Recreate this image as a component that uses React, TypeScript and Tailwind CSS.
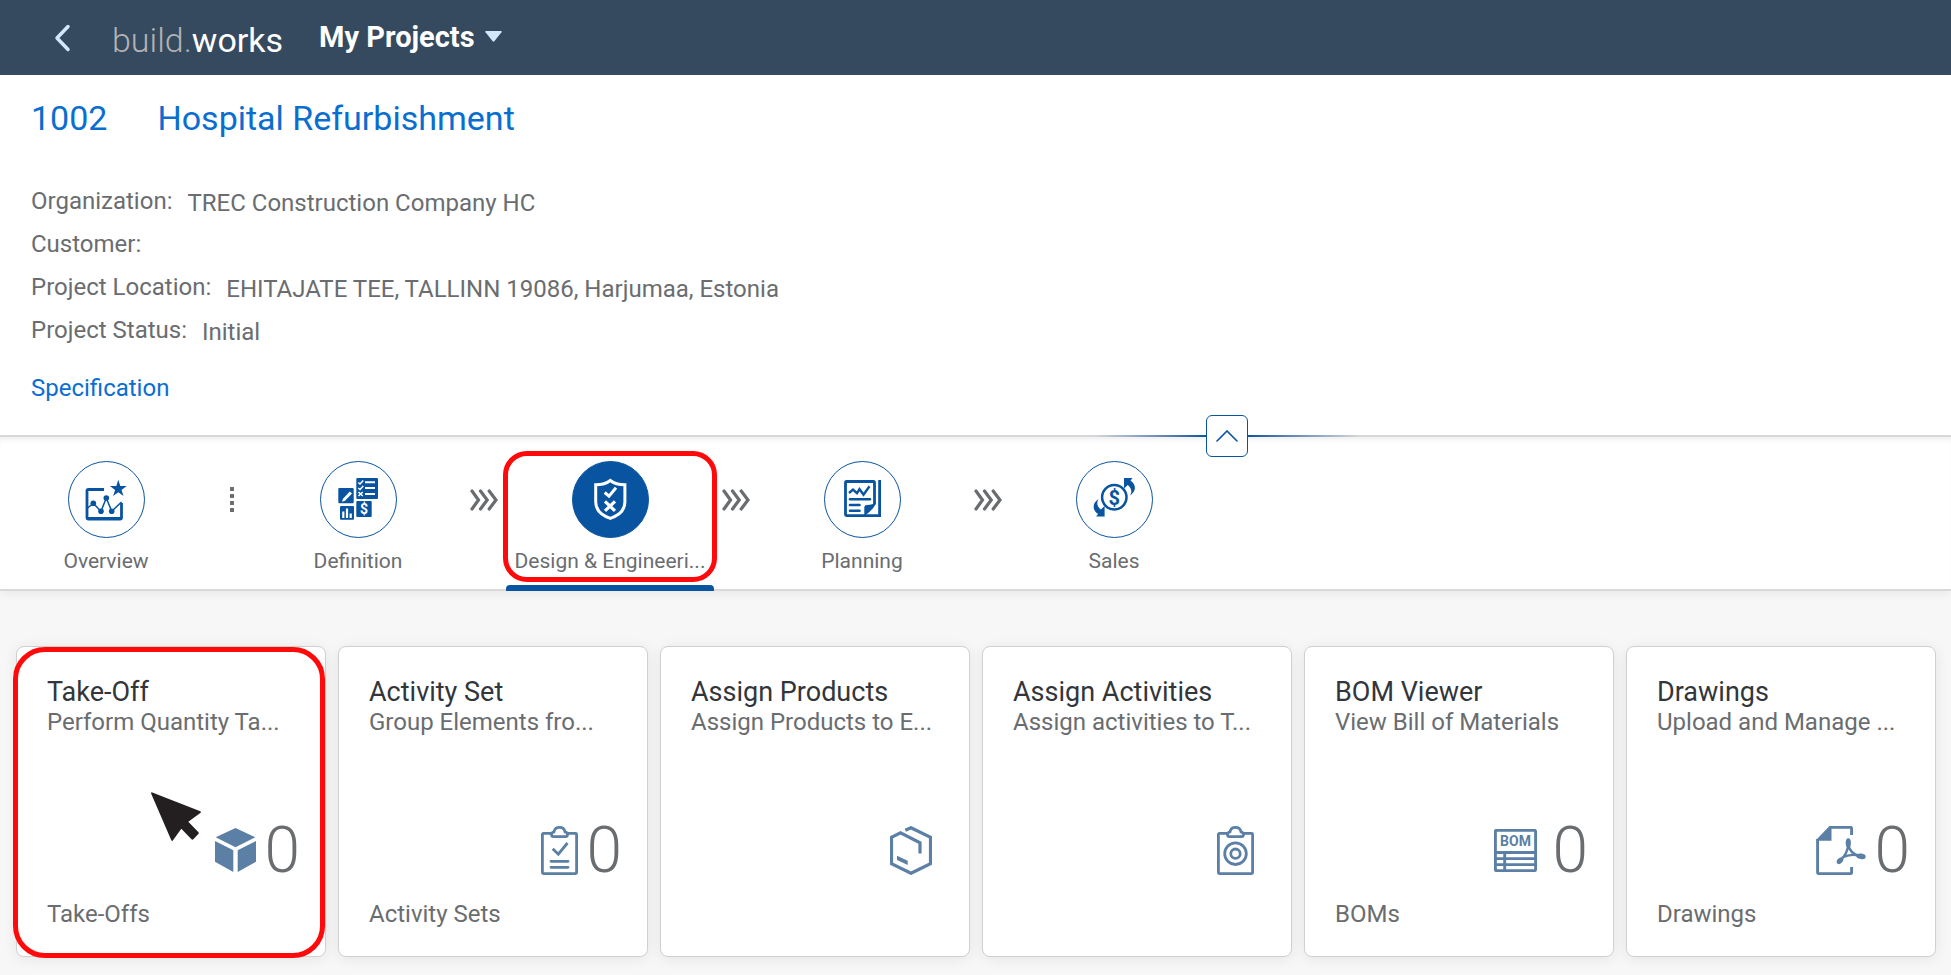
import type { ReactNode } from 'react';
import { clsx } from 'clsx';

interface Stage {
  id: string;
  label: string;
  icon: ReactNode;
  separator?: 'dots' | 'arrows';
}

interface Tile {
  title: string;
  subtitle: string;
  icon: ReactNode;
  value?: number;
  footer?: string;
}

/* Stage icons */

function OverviewIcon() {
  return (
    <svg viewBox="0 0 75 75" className="size-full" fill="none" stroke="currentColor">
      <path d="M35 27.5H19.5a1.5 1.5 0 0 0-1.5 1.5V55.5a1.5 1.5 0 0 0 1.5 1.5H51a1.5 1.5 0 0 0 1.5-1.5V41" strokeWidth="2.8" />
      <path d="M18 56.5H52.5" strokeWidth="3" />
      <path d="M17.5 47 24.3 41.3 32 49.3 37.3 36 42.7 49.3 52.5 40" strokeWidth="1.5" />
      <g fill="currentColor" stroke="none">
        <circle cx="24.3" cy="41.3" r="2.8" />
        <circle cx="32" cy="49.3" r="2.8" />
        <circle cx="37.3" cy="36" r="2.8" />
        <circle cx="42.7" cy="49.3" r="2.8" />
        <path d="M49.3 17.8l2 6.2h6.4l-5.2 3.9 2 6.2-5.2-3.9-5.2 3.9 2-6.2-5.2-3.9h6.4z" />
      </g>
    </svg>
  );
}

function DefinitionIcon() {
  return (
    <svg viewBox="0 0 75 75" className="size-full" fill="none" stroke="#fff">
      <g fill="currentColor" stroke="none">
        <rect x="35.3" y="16" width="21.7" height="21" rx="1" />
        <rect x="17.3" y="26" width="15.4" height="15.3" rx="1" />
        <rect x="35.3" y="39" width="15.4" height="16" rx="1" />
        <rect x="19" y="44" width="14" height="13.7" rx="1" />
      </g>
      <path d="M44 20.3h10M44 26h10M44 32h10" strokeWidth="2" />
      <path d="M37.3 20.5l1.7 1.5 3.3-3.5M37.3 26l1.7 1.5 3.3-3.5M37.5 30l4.3 4M41.8 30l-4.3 4" strokeWidth="1.5" />
      <path d="M22 36.8l6.8-7.3 2.2 2.1-6.9 7.1-3.2 1z" fill="#fff" stroke="none" />
      <path d="M22.3 56v-6.5M26 56v-9.5M29.7 56v-4.5" strokeWidth="2.2" />
      <text x="43" y="52" fontSize="14" fontWeight="700" textAnchor="middle" fill="#fff" stroke="none">$</text>
    </svg>
  );
}

function DesignIcon() {
  return (
    <svg viewBox="0 0 75 75" className="size-full" fill="none" stroke="currentColor">
      <path d="M37.3 18.5C33.5 21.5 28.5 22.8 22.7 22.8V40C22.7 48.5 29 53.5 37.3 56.3 45.6 53.5 51.9 48.5 51.9 40V22.8C46.1 22.8 41.1 21.5 37.3 18.5z" strokeWidth="3" />
      <path d="M31.7 30.5l4.3 3.7 7-8.5" strokeWidth="3" />
      <path d="M32 39.3l10 9.6M42 39.3l-10 9.6" strokeWidth="3.2" />
    </svg>
  );
}

function PlanningIcon() {
  return (
    <svg viewBox="0 0 75 75" className="size-full" fill="none" stroke="currentColor">
      <path d="M49.5 42.5V20.5a1 1 0 0 0-1-1H21.5a1 1 0 0 0-1 1V52.6a1 1 0 0 0 1 1H54.6V18" strokeWidth="2.8" />
      <path d="M24 31l4-3.5 4 3.7 2.5-4 4 5.5 6-8.5" strokeWidth="2.4" />
      <path d="M25 37.3h20M25 43h9.5M25 48.7h9.5" strokeWidth="2.6" strokeLinecap="round" />
      <path d="M39.3 54V45.5Q39.3 43 42 43 48 43 50.9 40 50.5 46 39.3 54z" fill="currentColor" stroke="none" />
    </svg>
  );
}

function SalesIcon() {
  return (
    <svg viewBox="0 0 75 75" className="size-full" fill="none" stroke="currentColor">
      <circle cx="37.3" cy="35.3" r="12.2" strokeWidth="2.5" />
      <text x="37.3" y="42.5" fontSize="20" fontWeight="700" textAnchor="middle" fill="currentColor" stroke="none">$</text>
      <g fill="currentColor" stroke="none">
        <path d="M47 16H55.5L53.5 18.5C59.5 22.5 59.5 29.5 53 33.5 55.5 29.5 54.5 26.5 50.8 23L47 26.5z" />
        <path d="M27.6 54.6H19.1L21.1 52.1C15.1 48.1 15.1 41.1 21.6 37.1 19.1 41.1 20.1 44.1 23.8 47.6L27.6 44.1z" />
      </g>
    </svg>
  );
}

/* Tile icons */

function CubeIcon() {
  return (
    <svg width="41" height="44" viewBox="0 0 41 44" fill="currentColor">
      <path d="M20.5 0 40.3 9.3 20.5 19.3.7 9.3z" />
      <path d="M0 13 18.3 22.3V44L0 33.7z" />
      <path d="M41 13 22.7 22.3V44L41 33.7z" />
    </svg>
  );
}

function Clipboard({ children }: { children: ReactNode }) {
  return (
    <svg width="37" height="49" viewBox="0 0 37 49" fill="none" stroke="currentColor" strokeWidth="2.8">
      <path d="M10 7.4H2.4a1 1 0 0 0-1 1V46.6a1 1 0 0 0 1 1H34.6a1 1 0 0 0 1-1V8.4a1 1 0 0 0-1-1H27" />
      <path d="M12.5 10.6Q10.5 10.6 10.5 8.5 10.5 6.3 13 5.8 14 1.4 18.5 1.4 23 1.4 24 5.8 26.5 6.3 26.5 8.5 26.5 10.6 24.5 10.6z" />
      {children}
    </svg>
  );
}

function ActivitySetIcon() {
  return (
    <Clipboard>
      <path d="M11.7 22.7l5.6 5.5 9.2-11.2" />
      <path d="M10 35.3h17M10 41.3h17" strokeLinecap="round" />
    </Clipboard>
  );
}

function ActivitiesIcon() {
  return (
    <Clipboard>
      <circle cx="18.5" cy="27.7" r="10.8" />
      <circle cx="18.5" cy="27.7" r="4.7" />
    </Clipboard>
  );
}

function ProductsIcon() {
  return (
    <svg width="42" height="49" viewBox="0 0 42 49" fill="none" stroke="currentColor" strokeWidth="3.2">
      <path d="M15.3 4.3 21 1.7 40.5 11.3V37.7L21 47.3 1.5 37.7V11.3L10.5 6.9 30 16.8V27.5" />
      <path d="M7 29.7 17.7 34.7V39L7 34z" fill="currentColor" stroke="none" />
    </svg>
  );
}

function BomIcon() {
  return (
    <svg width="50" height="43" viewBox="0 0 50 43" fill="none" stroke="currentColor" strokeWidth="2.9">
      <rect x="1.4" y="1.4" width="40.2" height="40.2" rx="1" />
      <path d="M1 23.5H42M1 29.6H42M1 35.6H42M10.7 23V42" />
      <text x="21.5" y="16.5" fontSize="14" fontWeight="700" textAnchor="middle" fill="currentColor" stroke="none">BOM</text>
    </svg>
  );
}

function PdfIcon() {
  return (
    <svg width="50" height="49" viewBox="0 0 50 49" fill="none" stroke="currentColor" strokeWidth="2.9">
      <path d="M13 1.4H34.6a1 1 0 0 1 1 1V9M1.6 13V46.6a1 1 0 0 0 1 1H34.6a1 1 0 0 0 1-1V41" />
      <path d="M.5 13.5 13.5 0H15.5V14.7H.5z" fill="currentColor" stroke="none" />
      <path d="M32.3 18C32 24 30 29 24.5 34.5M32.3 18C33 24 37 28.5 44 30.5M26 31.5Q34 27.5 43 29.5" strokeWidth="2.4" />
      <g fill="currentColor" stroke="none">
        <ellipse cx="32.3" cy="17" rx="2.6" ry="4.8" />
        <ellipse cx="24" cy="34.7" rx="3.8" ry="2.6" transform="rotate(-45 24 34.7)" />
        <ellipse cx="45" cy="30.3" rx="4.7" ry="2.8" transform="rotate(8 45 30.3)" />
      </g>
    </svg>
  );
}

const details = [
  { label: 'Organization:', value: 'TREC Construction Company HC' },
  { label: 'Customer:', value: '' },
  { label: 'Project Location:', value: 'EHITAJATE TEE, TALLINN 19086, Harjumaa, Estonia' },
  { label: 'Project Status:', value: 'Initial' },
];

const stages: Stage[] = [
  { id: 'overview', label: 'Overview', icon: <OverviewIcon />, separator: 'dots' },
  { id: 'definition', label: 'Definition', icon: <DefinitionIcon />, separator: 'arrows' },
  { id: 'design', label: 'Design & Engineeri...', icon: <DesignIcon />, separator: 'arrows' },
  { id: 'planning', label: 'Planning', icon: <PlanningIcon />, separator: 'arrows' },
  { id: 'sales', label: 'Sales', icon: <SalesIcon /> },
];

const tiles: Tile[] = [
  { title: 'Take-Off', subtitle: 'Perform Quantity Ta...', icon: <CubeIcon />, value: 0, footer: 'Take-Offs' },
  { title: 'Activity Set', subtitle: 'Group Elements fro...', icon: <ActivitySetIcon />, value: 0, footer: 'Activity Sets' },
  { title: 'Assign Products', subtitle: 'Assign Products to E...', icon: <ProductsIcon /> },
  { title: 'Assign Activities', subtitle: 'Assign activities to T...', icon: <ActivitiesIcon /> },
  { title: 'BOM Viewer', subtitle: 'View Bill of Materials', icon: <BomIcon />, value: 0, footer: 'BOMs' },
  { title: 'Drawings', subtitle: 'Upload and Manage ...', icon: <PdfIcon />, value: 0, footer: 'Drawings' },
];

function Separator({ type }: { type: 'dots' | 'arrows' }) {
  return (
    <div className="flex h-[77px] w-11 shrink-0 items-center justify-center text-[#6a6d70]">
      {type === 'dots' ? (
        <svg width="4" height="25" viewBox="0 0 4 25" fill="currentColor">
          <path d="M0 0h4v4H0zM0 7h4v4H0zM0 14h4v4H0zM0 21h4v4H0z" />
        </svg>
      ) : (
        <svg width="28" height="22" viewBox="0 0 28 22" fill="none" stroke="currentColor" strokeWidth="3.2" strokeLinecap="round">
          <path d="M2 2 8.5 11 2 20M10.5 2 17.2 11 10.500 20M19.2 2 26 11 19.200 20" />
        </svg>
      )}
    </div>
  );
}

function Header() {
  return (
    <header className="flex h-[75px] items-center bg-[#354a5f] pl-[54px]">
      <button type="button" aria-label="Back">
        <svg width="18" height="28" viewBox="0 0 18 28" fill="none" stroke="#d1e8ff" strokeWidth="3.5" strokeLinecap="round" strokeLinejoin="round">
          <path d="M14 2.500 3 14 14 25.500" />
        </svg>
      </button>
      <span className="ml-10 pt-1 text-[34px] leading-10 font-light text-white">
        <span className="text-[#b3b3b3]">build.</span>
        <span className="font-normal">works</span>
      </span>
      <button type="button" className="ml-9 flex items-center gap-[10px] pb-0.5 text-[29px] leading-10 font-bold text-white">
        My Projects
        <svg width="17" height="11" viewBox="0 0 17 11" fill="#d1e8ff">
          <path d="M1 0H16Q17.3 0 16.5 1.2L9.3 10.3Q8.5 11.2 7.7 10.3L.5 1.2Q-.3 0 1 0z" />
        </svg>
      </button>
    </header>
  );
}

function ProjectInfo() {
  return (
    <section className="border-b-2 border-[#d9d9d9] bg-white px-[31px] pt-[23px] pb-[33px]">
      <h1 className="flex gap-[50px] text-[34px] leading-10 text-[#0a6ed1]">
        <span>1002</span>
        <span>Hospital Refurbishment</span>
      </h1>
      <dl className="mt-[41px] text-2xl text-[#6a6d70]">
        {details.map((item) => (
          <div key={item.label} className="flex h-[43px] items-center gap-[15px]">
            <dt>{item.label}</dt>
            <dd className="pt-1">{item.value}</dd>
          </div>
        ))}
      </dl>
      <a href="#specification" className="mt-[23px] block text-2xl leading-7 text-[#0a6ed1]">
        Specification
      </a>
    </section>
  );
}

function CollapseButton() {
  return (
    <div className="absolute -top-[22px] left-[56%] flex items-center text-[#0854a0]">
      <span className="h-0.5 w-[113px] bg-gradient-to-l from-[#0854a0] to-[#d9d9d9]" />
      <button type="button" aria-label="Collapse header" className="flex size-[42px] items-center justify-center rounded-md border border-[#0854a0] bg-white">
        <svg width="22" height="12" viewBox="0 0 22 12" fill="none" stroke="currentColor" strokeWidth="1.6" strokeLinecap="round">
          <path d="M1 11 11 1 21 11" />
        </svg>
      </button>
      <span className="h-0.5 w-[113px] bg-gradient-to-r from-[#0854a0] to-[#d9d9d9]" />
    </div>
  );
}

function StageBar({ selected }: { selected: string }) {
  return (
    <nav className="relative flex h-[154px] border-b-2 border-[#d9d9d9] bg-white pt-6 pl-0.5 shadow-[inset_0_6px_6px_-4px_rgba(0,0,0,0.08),0_4px_8px_rgba(0,0,0,0.05)]">
      <CollapseButton />
      {stages.map((stage) => {
        const active = stage.id === selected;
        return (
          <div key={stage.id} className="flex">
            <button type="button" className="relative flex h-[130px] w-52 flex-col items-center">
              <span
                className={clsx(
                  'size-[77px] rounded-full border border-[#0854a0]',
                  active ? 'bg-[#0854a0] text-white' : 'bg-white text-[#0854a0]'
                )}
              >
                {stage.icon}
              </span>
              <span className="mt-[9px] text-[21px] leading-7 whitespace-nowrap text-[#6a6d70]">{stage.label}</span>
              {active && (
                <>
                  <span className="absolute inset-x-0 bottom-0 h-[6px] rounded-t bg-[#0854a0]" />
                  <span className="absolute -inset-x-[3px] -top-[10px] bottom-[9px] rounded-[24px] border-5 border-[#ff0a0a]" />
                </>
              )}
            </button>
            {stage.separator && <Separator type={stage.separator} />}
          </div>
        );
      })}
    </nav>
  );
}

function TileCard({ tile, highlighted }: { tile: Tile; highlighted: boolean }) {
  return (
    <a
      href="#tile"
      className="relative flex min-h-[311px] flex-col rounded-lg border border-[#d0d0d0] bg-white pt-[29px] pr-[25px] pb-[28px] pl-[30px] text-2xl leading-7 text-[#6a6d70] shadow-[0_2px_14px_rgba(0,0,0,0.08)]"
    >
      <h2 className="text-[27px] leading-8 text-[#32363a]">{tile.title}</h2>
      <p className="whitespace-nowrap">{tile.subtitle}</p>
      <div className="mt-auto mb-[18px] flex h-16 items-center justify-end gap-[9px]">
        <span className={clsx('text-[#5b7fa5]', tile.value === undefined && 'mr-3')}>{tile.icon}</span>
        {tile.value !== undefined && <span className="pt-0.5 text-[64px] leading-none font-light">{tile.value}</span>}
      </div>
      <p className="h-7">{tile.footer}</p>
      {highlighted && (
        <>
          <span className="absolute top-0 right-0 -bottom-0.5 -left-1 rounded-[32px] border-5 border-[#ff0a0a]" />
          <svg className="absolute top-[145px] left-[134px]" width="51" height="51" viewBox="0 0 51 51" fill="#231f20">
            <path d="M.7.3 49.3 19.3Q50.5 20.2 49.3 21L37.3 29.7 47.5 40.3Q48.2 41.2 47.3 42L42.3 47.3Q41.4 48 40.5 47.3L30.3 36.7 22 48.3Q21.2 49.5 20.3 48.3L.2 1.7Q-.2.3.7.3z" />
          </svg>
        </>
      )}
    </a>
  );
}

export default function App() {
  return (
    <div className="min-h-screen bg-[#f7f7f7] font-[Roboto,sans-serif]">
      <Header />
      <ProjectInfo />
      <StageBar selected="design" />
      <main className="grid grid-cols-6 gap-3 pt-[55px] pr-[15px] pb-[18px] pl-4">
        {tiles.map((tile, i) => (
          <TileCard key={tile.title} tile={tile} highlighted={i === 0} />
        ))}
      </main>
    </div>
  );
}
